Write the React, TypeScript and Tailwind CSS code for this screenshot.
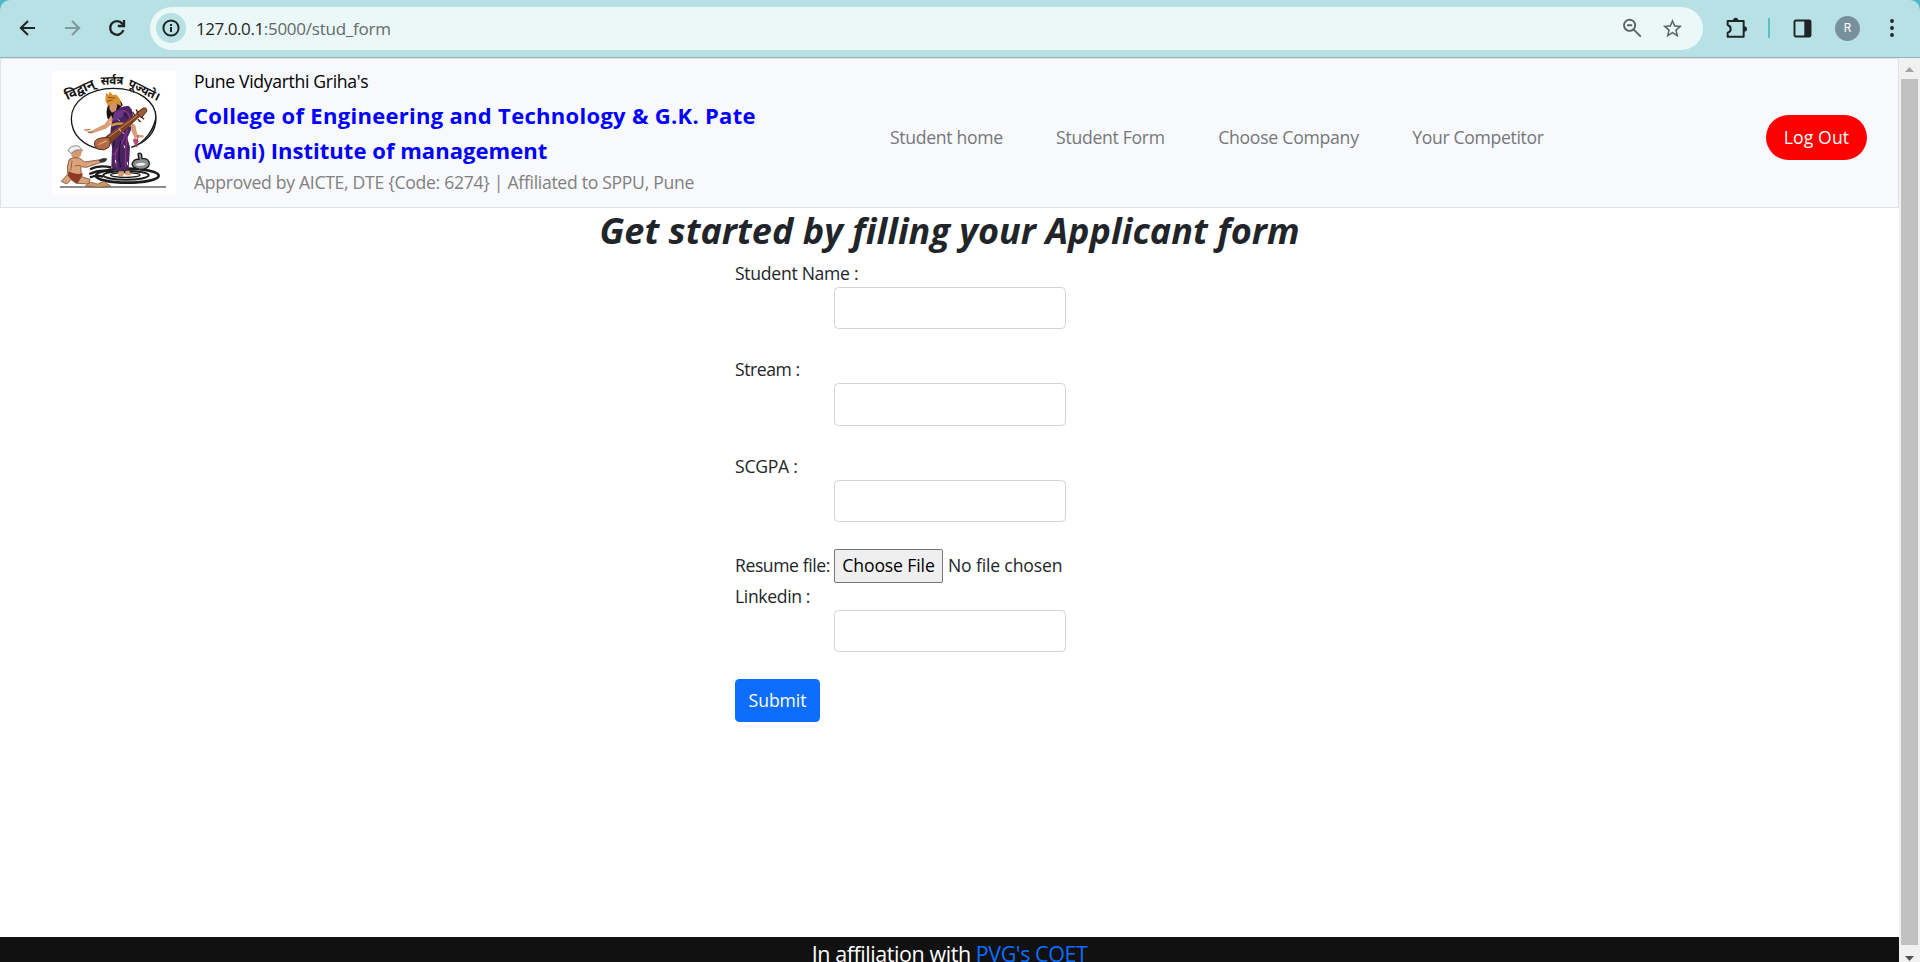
import type { ReactNode } from "react";
import { MdStarBorder } from "react-icons/md";

function Toolbar() {
  return (
    <div className="shrink-0 bg-[#4fb9c3]">
      <div className="flex h-[58px] items-center rounded-t-[10px] border-b border-[#92b3b7] bg-[#b7e1e4] pb-px text-[#202427]">
        <svg className="ml-[16px] size-[24px]" viewBox="0 0 24 24" fill="none" stroke="currentColor" strokeWidth="2.1">
          <path d="M19 12H5.5M12 4.9 4.9 12l7.1 7.1" />
        </svg>
        <svg className="ml-[20px] size-[24px]" viewBox="0 0 24 24" fill="none" stroke="#7f9a9d" strokeWidth="2.1">
          <path d="M5 12h13.5M12 4.9l7.1 7.1-7.1 7.1" />
        </svg>
        <svg className="ml-[21px] size-[24px]" viewBox="0 0 24 24" fill="none" stroke="currentColor" strokeWidth="2.3">
          <path d="M18.4 14.2A6.8 6.8 0 1 1 17.2 7.6L18.8 9.6" />
          <path d="M19 4v6h-6.2" />
        </svg>
        <div className="ml-[21px] flex h-[43px] w-[1553px] items-center rounded-full bg-[#ebf8f8] pl-[6px]">
          <span className="flex size-[30px] items-center justify-center rounded-full bg-[#b7e1e4]">
            <svg className="size-[18px]" viewBox="0 0 18 18" fill="none" stroke="currentColor" strokeWidth="2">
              <circle cx="9" cy="9" r="7.6" />
              <path d="M9 8v5M9 5v2" />
            </svg>
          </span>
          <span className="ml-[10px] whitespace-nowrap text-[17px] leading-[27px] tracking-[-0.45px] text-[#1f2426]">127.0.0.1</span>
          <span className="whitespace-nowrap text-[17px] leading-[27px] tracking-[-0.24px] text-[#63696b]">:5000/stud_form</span>
          <svg className="ml-auto size-[24px] text-[#5b6365]" viewBox="0 0 24 24" fill="none" stroke="currentColor" strokeWidth="1.9">
            <circle cx="9.6" cy="9.3" r="5.6" />
            <path d="M13.5 13.3 20.8 20.6M7 9.3h5.2" />
          </svg>
          <MdStarBorder className="mr-[19px] ml-[17px] size-[23px] text-[#5b6365]" />
        </div>
        <svg className="ml-[22px] h-[23px] w-[24px]" viewBox="434 49 72 69">
          <path
            d="M444 61H490V108H442V96Q451 94 451 85Q451 76 442 73V61Z"
            fill="none"
            stroke="currentColor"
            strokeWidth="6"
            strokeLinejoin="round"
          />
          <path d="M458 60a8 9 0 0 1 16 0ZM491 77a9 8 0 0 1 0 16Z" fill="currentColor" />
        </svg>
        <div className="ml-[19px] h-[20px] w-[2px] bg-[#5bbfc7]" />
        <svg className="ml-[23px] size-[19px]" viewBox="0 0 19 19">
          <rect x="1.5" y="1.5" width="16" height="16" rx="1.2" fill="none" stroke="currentColor" strokeWidth="1.9" />
          <path d="M11.3 1h6.7v17h-6.7z" fill="currentColor" />
        </svg>
        <span className="ml-[23px] flex size-[25px] items-center justify-center rounded-full bg-[#78909c] font-['Roboto',sans-serif] text-[12px] text-white">
          R
        </span>
        <svg className="ml-[20px] h-[20px] w-[24px]" viewBox="0 0 24 20" fill="currentColor">
          <circle cx="12" cy="3" r="1.9" />
          <circle cx="12" cy="10" r="1.9" />
          <circle cx="12" cy="17" r="1.9" />
        </svg>
      </div>
    </div>
  );
}

function Logo() {
  return (
    <svg className="size-[124px] shrink-0 bg-white" viewBox="36 33 372 372">
      <g className="font-['Noto_Sans_Devanagari','Noto_Sans',sans-serif] font-bold" fill="#111">
        <text transform="translate(82 121) rotate(-25)" fontSize="39">विद्वान्</text>
        <text transform="translate(182 74) rotate(-1)" fontSize="35">सर्वत्र</text>
        <text transform="translate(262 79) rotate(26)" fontSize="36">पूज्यते।</text>
      </g>
      <path d="M184 268C128 258 94 222 94 176C94 124 148 85 220 85C294 85 348 124 348 174C348 216 320 246 274 262" fill="none" stroke="#161616" strokeWidth="4" />
      <path d="M348 160C352 206 322 244 272 266C314 244 342 210 348 160Z" fill="#161616" />

      <g fill="none" stroke="#1b1b1b">
        <ellipse cx="262" cy="347" rx="94" ry="21" strokeWidth="8" />
        <ellipse cx="258" cy="346" rx="68" ry="13" strokeWidth="6" />
        <ellipse cx="256" cy="345" rx="44" ry="7" strokeWidth="4" />
        <path d="M60 381H378" strokeWidth="3.5" />
        <path d="M150 328Q176 314 214 322M148 342Q184 326 214 336M150 352Q170 344 190 350" strokeWidth="7" />
      </g>
      <path d="M276 312Q282 296 297 298L294 282Q300 276 305 284L306 296Q328 294 328 312Q326 328 300 328Q280 326 276 312Z" fill="#8b8f8f" stroke="#1b1b1b" strokeWidth="4" />
      <path d="M286 314Q300 304 318 312Q304 322 286 314Z" fill="#eee" />

      <path d="M206 132Q196 152 202 174L214 192L232 152L248 136Q244 118 226 114Z" fill="#17120f" />
      <path d="M208 136Q206 150 216 158L228 152L232 134L222 124Z" fill="#d3946d" />
      <path d="M196 122L198 98L205 104L210 94L217 104L230 104L240 118L244 138L222 128L204 138Z" fill="#d99132" />
      <path d="M204 112L226 114M202 124L218 120" stroke="#8c4a13" strokeWidth="3" />
      <path d="M214 166L194 192L152 214L134 211L152 221L198 206L222 186Z" fill="#d89d77" />
      <path d="M132 210L152 208M144 218L160 216" stroke="#a86d4c" strokeWidth="3" />
      <path d="M222 158Q240 136 266 138Q284 152 278 186L272 212L262 234L270 262L266 328L238 334L214 322L216 262Q206 220 216 188Z" fill="#4a2462" />
      <path d="M222 158Q244 144 256 152L246 172L218 184Z" fill="#6c3484" />
      <path d="M264 208Q240 268 219 286M262 228Q254 272 258 320M230 268Q222 296 230 322M246 150Q270 154 270 178" fill="none" stroke="#8a3580" strokeWidth="4" />
      <path d="M242 244Q232 286 242 322M252 158L262 174M224 232L220 262" fill="none" stroke="#24123a" strokeWidth="4" />
      <path d="M214 196Q244 184 272 198" fill="none" stroke="#d09a35" strokeWidth="7" />
      <path d="M272 186L286 196L292 224L310 226L312 232L284 234L274 212Z" fill="#d89d77" />
      <path d="M278 240Q288 228 296 244L286 258Z" fill="#c14d7c" />
      <path d="M294 224L290 262" stroke="#a23a6a" strokeWidth="2.5" />
      <path d="M236 334H252L250 348H234ZM256 332H268L274 346H256Z" fill="#d89d77" />
      <path d="M194 232L292 158L302 168L210 252Z" fill="#7d4128" />
      <path d="M206 232L300 160" stroke="#d08a5c" strokeWidth="3" />
      <path d="M290 158L310 144Q322 142 320 154L304 174Z" fill="#9c5a35" stroke="#4b2614" strokeWidth="3" />
      <path d="M284 166L278 156M294 158L288 148M304 170L312 178M294 178L302 186" stroke="#4b2614" strokeWidth="4" />
      <path d="M164 256Q160 238 182 234L206 232Q216 246 206 262Q194 274 176 268Q166 264 164 256Z" fill="#b46a43" stroke="#5c2f1b" strokeWidth="3" />
      <path d="M176 254L200 242" stroke="#e0a57e" strokeWidth="4" />
      <path d="M208 184l4 6M234 178l5 5M238 206l4 8M252 256l2 8M226 300l2 9M262 306l1 9M248 218l5 3" stroke="#efe6f0" strokeWidth="3" />

      <path d="M92 278Q94 294 108 296L122 288L126 272L112 266Z" fill="#d39a73" />
      <path d="M84 272Q92 254 116 258L128 272Q108 264 94 280Z" fill="#f0f0ef" stroke="#777" strokeWidth="2.5" />
      <path d="M88 298Q98 290 118 294L134 306L174 300L192 298L180 308L140 322L122 320L124 344H84Q78 320 88 298Z" fill="#dba37c" stroke="#7b4a30" strokeWidth="2.5" />
      <path d="M96 302L92 332M104 318L122 316" stroke="#9c6040" strokeWidth="3" />
      <path d="M176 302Q186 290 202 296Q198 308 182 308Z" fill="#333" />
      <path d="M86 334Q106 346 128 340L126 354L110 372L82 352Z" fill="#8d3a24" />
      <path d="M82 344L64 364L80 372L94 358ZM124 350L150 358L146 372L112 370Z" fill="#dba37c" stroke="#7b4a30" strokeWidth="2.5" />
      <path d="M136 378L152 366L172 372L192 364L212 378Q176 386 136 378Z" fill="#c9976c" stroke="#7b4a30" strokeWidth="2" />
    </svg>
  );
}

function Header() {
  return (
    <header className="flex h-[150px] shrink-0 items-center border border-[#dee2e6] bg-[#f8f9fc] pr-[31px] pl-[51px]">
      <Logo />
      <div className="mt-[-2px] ml-[18px] flex w-[696px] shrink-0 flex-col whitespace-nowrap leading-[27px]">
        <span className="tracking-[-0.32px] text-black">Pune Vidyarthi Griha's</span>
        <div className="mt-[3px] mb-px text-[22px] leading-[35px] font-bold text-[#0000ff]">
          <div className="tracking-[0.295px]">College of Engineering and Technology &amp; G.K. Pate</div>
          <div className="tracking-[0.04px]">(Wani) Institute of management</div>
        </div>
        <span className="tracking-[-0.3px] text-[#808080]">{"Approved by AICTE, DTE {Code: 6274} | Affiliated to SPPU, Pune"}</span>
      </div>
      <nav className="flex gap-[53.4px] pt-[9px] leading-[27px] whitespace-nowrap text-[#74777a]">
        <a className="tracking-[-0.32px]">Student home</a>
        <a className="tracking-[-0.29px]">Student Form</a>
        <a className="tracking-[-0.24px]">Choose Company</a>
        <a className="tracking-[-0.32px]">Your Competitor</a>
      </nav>
      <button className="mt-[9px] ml-auto h-[45px] w-[101px] rounded-full bg-[#ff0000] leading-[27px] tracking-[0.1px] text-white">Log Out</button>
    </header>
  );
}

function Field({ children }: { children: ReactNode }) {
  return (
    <div className="mb-[27px] flex flex-col">
      {children}
      <input className="ml-[99px] h-[42.25px] w-[232px] rounded-[4.5px] border border-[#ced4da] bg-white px-3" />
    </div>
  );
}

function ApplicantForm() {
  return (
    <form className="ml-[735px] flex w-[340px] flex-col leading-[27px] whitespace-nowrap text-[#212529]">
      <Field>
        <label className="tracking-[-0.29px]">Student Name :</label>
      </Field>
      <Field>
        <label className="tracking-[-0.45px]">Stream :</label>
      </Field>
      <Field>
        <label className="tracking-[-0.25px]">SCGPA :</label>
      </Field>
      <div className="flex h-[34px] items-center">
        <label className="w-[99px] tracking-[-0.42px]">Resume file:</label>
        <button type="button" className="h-[34px] w-[109px] rounded-[2px] border border-[#767676] bg-[#efefef] tracking-[-0.13px] text-black">
          Choose File
        </button>
        <span className="ml-[5px] tracking-[-0.16px]">No file chosen</span>
      </div>
      <Field>
        <label className="tracking-[-0.36px]">Linkedin :</label>
      </Field>
      <button type="button" className="h-[43px] w-[85px] rounded-[4.5px] bg-[#0d6efd] tracking-[-0.05px] text-white">
        Submit
      </button>
    </form>
  );
}

function Scrollbar() {
  return (
    <div className="flex w-[21px] shrink-0 flex-col items-center bg-[#f1f1f1]">
      <svg className="h-[21px] w-[11px] shrink-0" viewBox="0 0 11 21">
        <path d="M1 14 5.5 9 10 14Z" fill="#a3a3a3" />
      </svg>
      <div className="w-[17px] flex-1 bg-[#c1c1c1]" />
      <svg className="h-[17px] w-[11px] shrink-0" viewBox="0 0 11 17">
        <path d="M1 11 5.5 16 10 11Z" fill="#505050" />
      </svg>
    </div>
  );
}

export default function App() {
  return (
    <div className="flex h-[962px] w-[1920px] flex-col overflow-hidden bg-white font-['Open_Sans',sans-serif] text-[17.6px]">
      <Toolbar />
      <div className="flex min-h-0 flex-1">
        <main className="flex w-[1899px] flex-col">
          <Header />
          <h1 className="mb-[7px] text-center text-[36px] leading-[45px] font-bold tracking-[0.03px] text-[#212529] italic">
            Get started by filling your Applicant form
          </h1>
          <ApplicantForm />
          <footer className="mt-auto h-[25px] shrink-0 bg-[#111111] text-center text-[21.5px] leading-[34px] whitespace-nowrap text-white">
            <span className="tracking-[-0.43px]">In affiliation with </span>
            <a className="tracking-[-0.45px] text-[#0d6efd]">PVG's COET</a>
          </footer>
        </main>
        <Scrollbar />
      </div>
    </div>
  );
}
